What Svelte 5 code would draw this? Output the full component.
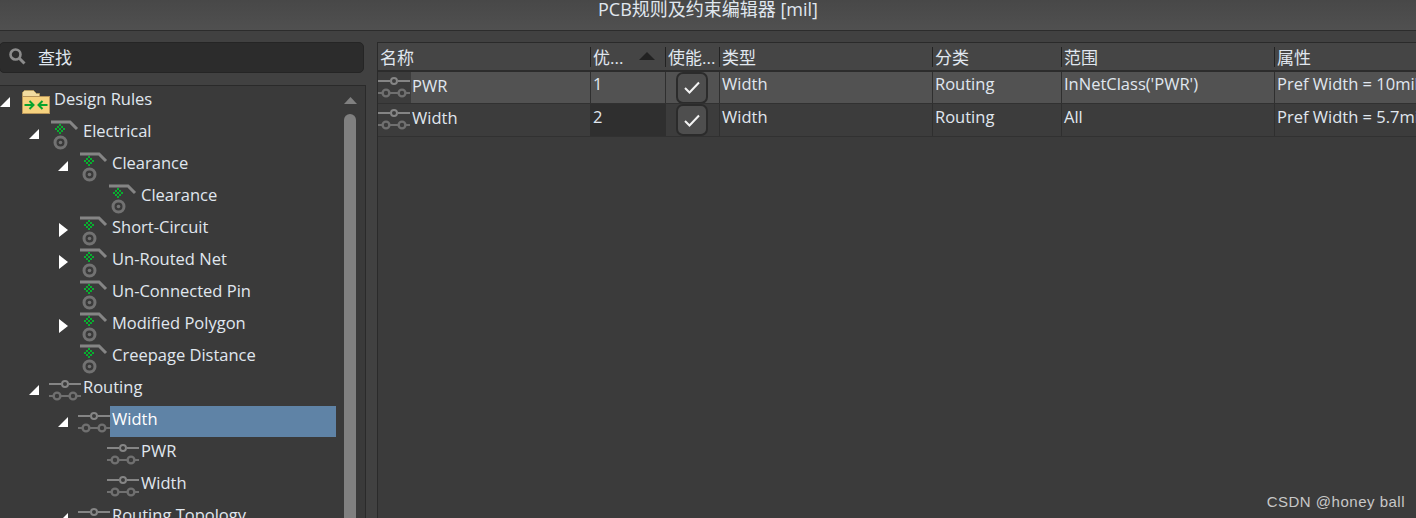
<script>
  const tree = [
    { depth: 0, arrow: 'open', icon: 'folder', label: 'Design Rules' },
    { depth: 1, arrow: 'open', icon: 'elec', label: 'Electrical' },
    { depth: 2, arrow: 'open', icon: 'elec', label: 'Clearance' },
    { depth: 3, icon: 'elec', label: 'Clearance' },
    { depth: 2, arrow: 'closed', icon: 'elec', label: 'Short-Circuit' },
    { depth: 2, arrow: 'closed', icon: 'elec', label: 'Un-Routed Net' },
    { depth: 2, icon: 'elec', label: 'Un-Connected Pin' },
    { depth: 2, arrow: 'closed', icon: 'elec', label: 'Modified Polygon' },
    { depth: 2, icon: 'elec', label: 'Creepage Distance' },
    { depth: 1, arrow: 'open', icon: 'route', label: 'Routing' },
    { depth: 2, arrow: 'open', icon: 'route', label: 'Width', selected: true },
    { depth: 3, icon: 'route', label: 'PWR' },
    { depth: 3, icon: 'route', label: 'Width' },
    { depth: 2, arrow: 'open', icon: 'route', label: 'Routing Topology' }
  ];

  const columns = [
    { label: '名称' },
    { label: '优...', sort: true },
    { label: '使能...' },
    { label: '类型' },
    { label: '分类' },
    { label: '范围' },
    { label: '属性' }
  ];

  const rules = [
    { name: 'PWR', priority: '1', type: 'Width', category: 'Routing', scope: "InNetClass('PWR')", attrs: 'Pref Width = 10mil', active: true },
    { name: 'Width', priority: '2', type: 'Width', category: 'Routing', scope: 'All', attrs: 'Pref Width = 5.7mil' }
  ];

  // checker dots of the green diamond on the electrical icon
  const dots = [[0, 0], [-2, -2], [2, -2], [-2, 2], [2, 2], [-4, 0], [4, 0], [0, -4], [0, 4]];
</script>

{#snippet routeIcon()}
  <svg class="route-icon" width="32" height="24" viewBox="0 0 32 24" fill="none">
    <g stroke="#858585" stroke-width="2">
      <path d="M0 5h12M20 5h12" />
      <circle cx="16" cy="5" r="3" />
    </g>
    <g stroke="#707070" stroke-width="2">
      <path d="M0 17h4M12 17h8M28 17h4" />
      <circle cx="8" cy="17" r="3.400" stroke-width="2.400" />
      <circle cx="24" cy="17" r="3.400" stroke-width="2.400" />
    </g>
  </svg>
{/snippet}

{#snippet elecIcon()}
  <svg class="elec-icon" width="28" height="30" viewBox="0 0 28 30" fill="none">
    <path d="M0 2h19l7 7" stroke="#858585" stroke-width="3" />
    {#each dots as [dx, dy]}
      <rect x={8 + dx} y={8 + dy} width="2" height="2" fill="#08b030" />
    {/each}
    <circle cx="9.500" cy="22.500" r="5.500" stroke="#727272" stroke-width="3" />
    <circle cx="9.500" cy="22.500" r="1.800" fill="#727272" />
  </svg>
{/snippet}

{#snippet folderIcon()}
  <svg class="folder-icon" width="28" height="24" viewBox="0 0 28 24">
    <path d="M0.5 7V2.500l2-2h9l3 3h3V7z" fill="#f2dca0" stroke="#b39a5e" />
    <rect x="0.5" y="6.500" width="27" height="17" fill="#f6d27f" stroke="#b8955a" />
    <path d="M2.500 15h9M7.500 11l4 4-4 4M25.500 15h-9M20.500 11l-4 4 4 4" fill="none" stroke="#07a32e" stroke-width="2" />
  </svg>
{/snippet}

{#snippet checkbox()}
  <span class="check">
    <svg width="16" height="13" viewBox="0 0 16 13" fill="none" stroke="#f4f4f4" stroke-width="2">
      <path d="M1 7l4.500 4.500L15 1.500" />
    </svg>
  </span>
{/snippet}

<div class="window">
  <header class="titlebar">PCB规则及约束编辑器 [mil]</header>

  <div class="body">
    <aside class="sidebar">
      <div class="search">
        <svg width="18" height="18" viewBox="0 0 18 18" fill="none" stroke="#8c8c8c">
          <circle cx="7.500" cy="7.500" r="5" stroke-width="2.600" />
          <path d="M11.500 11.500l5 5" stroke-width="3" />
        </svg>
        <span>查找</span>
      </div>

      <div class="tree">
        <ul class="nodes">
          {#each tree as node}
            <li class="node" style="padding-left: {node.depth * 29}px">
              <span class="arrow {node.arrow ?? ''}"></span>
              <span class="icon-slot">
                {#if node.icon === 'folder'}
                  {@render folderIcon()}
                {:else if node.icon === 'elec'}
                  {@render elecIcon()}
                {:else}
                  {@render routeIcon()}
                {/if}
              </span>
              <span class="node-label" class:selected={node.selected}>{node.label}</span>
            </li>
          {/each}
        </ul>
        <div class="scrollbar">
          <span class="scroll-up"></span>
          <span class="scroll-thumb"></span>
        </div>
      </div>
    </aside>

    <main class="rules">
      <div class="table">
        <div class="row head">
          {#each columns as col}
            <div class="cell">
              <span class="head-label">{col.label}</span>
              {#if col.sort}<span class="sort"></span>{/if}
            </div>
          {/each}
        </div>
        {#each rules as rule}
          <div class="row" class:active={rule.active}>
            <div class="cell name">
              <span class="name-icon">{@render routeIcon()}</span>
              <span class="name-text">{rule.name}</span>
            </div>
            <div class="cell priority">{rule.priority}</div>
            <div class="cell enabled">{@render checkbox()}</div>
            <div class="cell">{rule.type}</div>
            <div class="cell">{rule.category}</div>
            <div class="cell">{rule.scope}</div>
            <div class="cell attrs">{rule.attrs}</div>
          </div>
        {/each}
      </div>
    </main>
  </div>

  <span class="watermark">CSDN @honey ball</span>
</div>

<style>
  :global(body) {
    margin: 0;
    background: #3b3b3b;
  }

  .window {
    position: relative;
    display: flex;
    flex-direction: column;
    width: 1416px;
    height: 518px;
    overflow: hidden;
    background: #3b3b3b;
    color: #e0e7ef;
    font-family: "Open Sans", "Noto Sans CJK SC", sans-serif;
    font-size: 16.5px;
  }

  /* the window's top edge is cropped off in the shot */
  .titlebar {
    flex: none;
    box-sizing: border-box;
    height: 45px;
    margin-top: -14px;
    display: flex;
    align-items: center;
    justify-content: center;
    background: linear-gradient(#444, #505050);
    border-bottom: 1px solid #2c2c2c;
    font-size: 18px;
  }

  .body {
    flex: 1;
    display: flex;
    min-height: 0;
  }

  .sidebar {
    flex: none;
    width: 366px;
    padding-top: 11px;
    display: flex;
    flex-direction: column;
    background: #414141;
  }

  .search {
    flex: none;
    box-sizing: border-box;
    width: 365px;
    height: 31px;
    margin-left: -1px;
    padding: 0 0 3px 8px;
    display: flex;
    align-items: center;
    gap: 12px;
    background: #2c2c2c;
    border: 1px solid #252525;
    border-radius: 5px;
    font-size: 17px;
  }

  .tree {
    flex: 1;
    box-sizing: border-box;
    margin-top: 12px;
    display: flex;
    min-height: 0;
    background: #3a3a3a;
    border-top: 1px solid #2a2a2a;
    border-right: 1px solid #2a2a2a;
  }

  .nodes {
    flex: 1;
    min-width: 0;
    list-style: none;
    margin: -3px 0 0;
    padding: 0;
  }

  .node {
    height: 32px;
    display: flex;
    align-items: center;
  }

  .arrow {
    flex: none;
    width: 10px;
    height: 10px;
    margin: 6px 12px 0 0;
  }
  .arrow.open {
    clip-path: polygon(100% 0, 100% 100%, 0 100%);
    background: #fff;
  }
  .arrow.closed {
    width: 9px;
    height: 14px;
    margin-left: 1px;
    clip-path: polygon(0 0, 100% 50%, 0 100%);
    background: #fff;
  }

  .icon-slot {
    flex: none;
    width: 28px;
    height: 30px;
    display: flex;
    align-items: center;
  }
  .folder-icon {
    flex: none;
    margin-top: 6px;
  }
  .elec-icon {
    flex: none;
    margin-top: 8px;
  }
  .route-icon {
    flex: none;
  }
  .icon-slot .route-icon {
    margin: 8px 0 0 -2px;
  }

  .node-label {
    position: relative;
    margin: 0 0 2px 4px;
    line-height: 31px;
    white-space: nowrap;
  }
  .node-label.selected {
    flex: 1;
    align-self: flex-start;
    margin: 3px 8px 0 2px;
    padding: 0 0 5px 2px;
    line-height: 26px;
    background: #5f83a6;
    color: #fff;
  }

  .scrollbar {
    flex: none;
    width: 21px;
    display: flex;
    flex-direction: column;
    align-items: flex-start;
  }
  .scroll-up {
    margin-top: 11px;
    width: 13px;
    height: 7px;
    clip-path: polygon(50% 0, 100% 100%, 0 100%);
    background: #808080;
  }
  .scroll-thumb {
    flex: 1;
    margin-top: 10px;
    width: 12px;
    border-radius: 6px 6px 0 0;
    background: #808080;
  }

  .rules {
    flex: 1;
    min-width: 0;
    padding: 11px 0 0 11px;
    background: #414141;
  }

  .table {
    height: 100%;
    background: #3b3b3b;
    border-left: 1px solid #2a2a2a;
    border-top: 1px solid #2a2a2a;
  }

  .row {
    box-sizing: border-box;
    display: grid;
    grid-template-columns: 212px 75px 54px 213px 129px 213px 161px;
    height: 33px;
    background: #3c3c3c;
    border-bottom: 1px solid #313131;
  }
  .row.head {
    height: 29px;
    align-items: center;
    background: #454545;
    border-bottom: 2px solid #2c2c2c;
  }
  .row.active {
    height: 32px;
    background: #525252;
  }

  .cell {
    box-sizing: border-box;
    padding: 0 0 8px 2px;
    display: flex;
    align-items: center;
    white-space: nowrap;
    overflow: hidden;
    border-left: 1px solid #2f2f2f;
  }
  .row.active .cell {
    padding-bottom: 9px;
  }
  .cell:first-child {
    border-left: 0;
  }
  .row.head .cell {
    height: 20px;
    padding-bottom: 1px;
    border-left-color: #222;
    font-size: 17px;
  }
  .head-label {
    flex: 1;
  }
  .sort {
    flex: none;
    width: 16px;
    height: 8px;
    margin-right: 10px;
    clip-path: polygon(50% 0, 100% 100%, 0 100%);
    background: #222;
  }

  .row .cell.name {
    padding: 0;
  }
  .name-icon {
    flex: none;
    width: 33px;
    height: 100%;
    display: flex;
    align-items: center;
    background: #3c3c3c;
  }
  .name-text {
    margin-left: 1px;
    padding-bottom: 5px;
  }
  .row:not(.active) .priority {
    background: #2f2f2f;
  }
  .row .cell.enabled {
    justify-content: center;
    padding: 0;
  }

  .check {
    box-sizing: border-box;
    width: 32px;
    height: 32px;
    margin-right: 2px;
    display: flex;
    align-items: center;
    justify-content: center;
    background: #4e4e4e;
    border: 2px solid #2b2b2b;
    border-radius: 7px;
  }

  .watermark {
    position: absolute;
    right: 11px;
    bottom: 8px;
    font-family: "Liberation Sans", sans-serif;
    font-size: 15px;
    letter-spacing: 0.5px;
    color: #c8c8c8;
  }
</style>
